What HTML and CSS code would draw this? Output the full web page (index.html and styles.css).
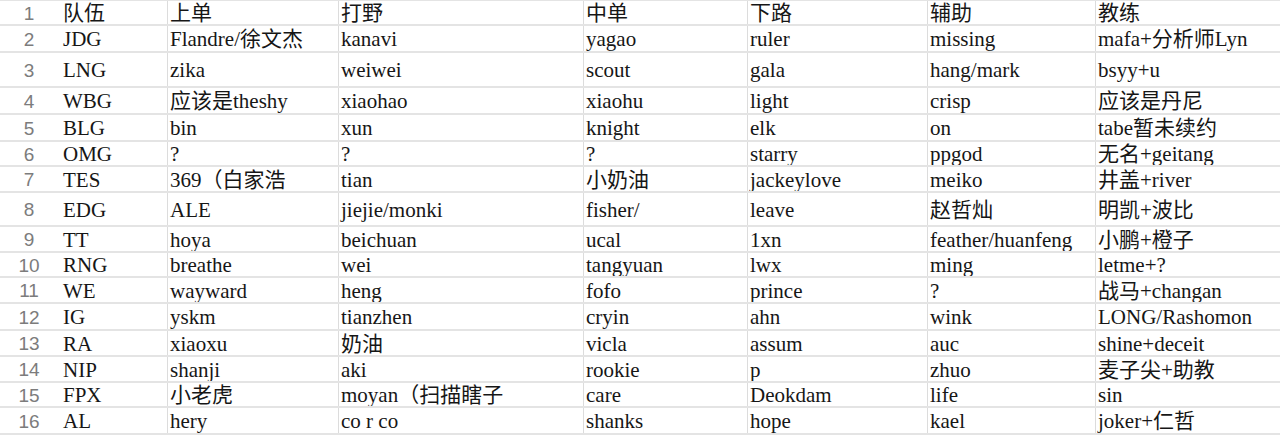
FILE: index.html
```html
<!DOCTYPE html>
<html lang="zh">
<head>
<meta charset="utf-8">
<title>LPL 阵容</title>
<link rel="stylesheet" href="styles.css">
</head>
<body>
<div class="sheet">
  <div class="row"><div class="num">1</div><div class="c team">队伍</div><div class="c v">上单</div><div class="c v">打野</div><div class="c v">中单</div><div class="c v">下路</div><div class="c v">辅助</div><div class="c v">教练</div></div>
  <div class="row"><div class="num">2</div><div class="c team">JDG</div><div class="c v">Flandre/徐文杰</div><div class="c v">kanavi</div><div class="c v">yagao</div><div class="c v">ruler</div><div class="c v">missing</div><div class="c v">mafa+分析师Lyn</div></div>
  <div class="row"><div class="num">3</div><div class="c team">LNG</div><div class="c v">zika</div><div class="c v">weiwei</div><div class="c v">scout</div><div class="c v">gala</div><div class="c v">hang/mark</div><div class="c v">bsyy+u</div></div>
  <div class="row"><div class="num">4</div><div class="c team">WBG</div><div class="c v">应该是theshy</div><div class="c v">xiaohao</div><div class="c v">xiaohu</div><div class="c v">light</div><div class="c v">crisp</div><div class="c v">应该是丹尼</div></div>
  <div class="row"><div class="num">5</div><div class="c team">BLG</div><div class="c v">bin</div><div class="c v">xun</div><div class="c v">knight</div><div class="c v">elk</div><div class="c v">on</div><div class="c v">tabe暂未续约</div></div>
  <div class="row"><div class="num">6</div><div class="c team">OMG</div><div class="c v">?</div><div class="c v">?</div><div class="c v">?</div><div class="c v">starry</div><div class="c v">ppgod</div><div class="c v">无名+geitang</div></div>
  <div class="row"><div class="num">7</div><div class="c team">TES</div><div class="c v">369（白家浩</div><div class="c v">tian</div><div class="c v">小奶油</div><div class="c v">jackeylove</div><div class="c v">meiko</div><div class="c v">井盖+river</div></div>
  <div class="row"><div class="num">8</div><div class="c team">EDG</div><div class="c v">ALE</div><div class="c v">jiejie/monki</div><div class="c v">fisher/</div><div class="c v">leave</div><div class="c v">赵哲灿</div><div class="c v">明凯+波比</div></div>
  <div class="row"><div class="num">9</div><div class="c team">TT</div><div class="c v">hoya</div><div class="c v">beichuan</div><div class="c v">ucal</div><div class="c v">1xn</div><div class="c v">feather/huanfeng</div><div class="c v">小鹏+橙子</div></div>
  <div class="row"><div class="num">10</div><div class="c team">RNG</div><div class="c v">breathe</div><div class="c v">wei</div><div class="c v">tangyuan</div><div class="c v">lwx</div><div class="c v">ming</div><div class="c v">letme+?</div></div>
  <div class="row"><div class="num">11</div><div class="c team">WE</div><div class="c v">wayward</div><div class="c v">heng</div><div class="c v">fofo</div><div class="c v">prince</div><div class="c v">?</div><div class="c v">战马+changan</div></div>
  <div class="row"><div class="num">12</div><div class="c team">IG</div><div class="c v">yskm</div><div class="c v">tianzhen</div><div class="c v">cryin</div><div class="c v">ahn</div><div class="c v">wink</div><div class="c v">LONG/Rashomon</div></div>
  <div class="row"><div class="num">13</div><div class="c team">RA</div><div class="c v">xiaoxu</div><div class="c v">奶油</div><div class="c v">vicla</div><div class="c v">assum</div><div class="c v">auc</div><div class="c v">shine+deceit</div></div>
  <div class="row"><div class="num">14</div><div class="c team">NIP</div><div class="c v">shanji</div><div class="c v">aki</div><div class="c v">rookie</div><div class="c v">p</div><div class="c v">zhuo</div><div class="c v">麦子尖+助教</div></div>
  <div class="row"><div class="num">15</div><div class="c team">FPX</div><div class="c v">小老虎</div><div class="c v">moyan（扫描瞎子</div><div class="c v">care</div><div class="c v">Deokdam</div><div class="c v">life</div><div class="c v">sin</div></div>
  <div class="row"><div class="num">16</div><div class="c team">AL</div><div class="c v">hery</div><div class="c v">co r co</div><div class="c v">shanks</div><div class="c v">hope</div><div class="c v">kael</div><div class="c v">joker+仁哲</div></div>
</div>
</body>
</html>
```

FILE: styles.css
```css
html, body {
  margin: 0;
  padding: 0;
  background: #ffffff;
}

.sheet {
  display: grid;
  grid-template-rows: 25px 27px 35px 27px 27px 25px 26px 34px 26px 25px 26px 27px 26px 26px 25px 27px;
  border-top: 1px solid #e4e4e4;
  font-family: "Liberation Serif", "Noto Sans CJK SC", serif;
  font-size: 21px;
  color: #161616;
}

.row {
  display: grid;
  grid-template-columns: 60px 107px 171px 245px 164px 180px 168px 1fr;
  border-bottom: 2px solid #e4e4e4;
  box-sizing: border-box;
}

.num {
  display: flex;
  align-items: center;
  justify-content: center;
  font-family: "Liberation Sans", "DejaVu Sans", sans-serif;
  font-size: 19px;
  color: #7c7c7c;
  padding-right: 2px;
  padding-top: 1px;
  line-height: 1;
}

.c {
  display: flex;
  align-items: center;
  padding-left: 3px;
  padding-top: 2px;
  white-space: nowrap;
  overflow: hidden;
  line-height: 1;
}

.v {
  border-left: 1px solid #dcdcdc;
  padding-left: 2px;
}
```
